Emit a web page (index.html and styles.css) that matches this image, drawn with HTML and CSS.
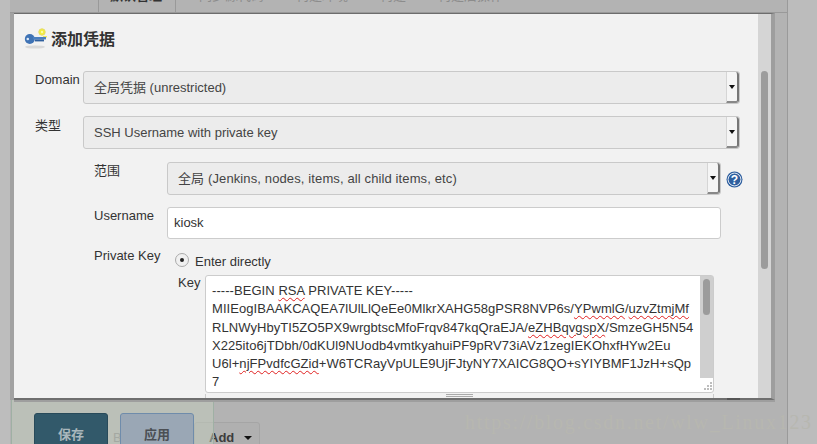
FILE: index.html
```html
<!DOCTYPE html>
<html lang="zh">
<head>
<meta charset="utf-8">
<title>添加凭据</title>
<link rel="stylesheet" href="styles.css">
</head>
<body>
<div class="page">
  <div class="page-edge"></div>
  <div class="page-main">
    <div class="tabs">
      <span class="tab tab-first"></span>
      <span class="tab tab-active"><em>默认管理</em></span>
      <span class="tab tab-lead"><em>同步源代码</em></span>
      <span class="tab"><em>构建环境</em></span>
      <span class="tab"><em>构建</em></span>
      <span class="tab"><em>构建后操作</em></span>
    </div>
    <div class="rule"></div>
    <div class="watermark">https://blog.csdn.net/wlw_Linux123</div>
  </div>
  <div class="page-right"></div>
</div>

<div class="footer-under">
  <button class="btn-add">Add <i class="caret"></i></button>
</div>
<div class="footer-glass"></div>
<div class="footer-buttons">
  <button class="btn btn-save">保存</button>
  <span class="footer-hidden">B</span>
  <button class="btn btn-apply">应用</button>
</div>

<div class="dialog">
  <div class="dialog-body">
    <h1 class="title">
      <svg class="key-icon" width="24" height="24" viewBox="0 0 24 24">
        <ellipse cx="11" cy="21" rx="10" ry="1.6" fill="#d9d9d9"/>
        <circle cx="18" cy="6" r="3.2" fill="#f4ee3c" stroke="#e5dc6a"/>
        <circle cx="18" cy="6" r="1.2" fill="#fbfaa8"/>
        <rect x="19" y="10" width="4" height="1.5" fill="#f0e85c"/>
        <circle cx="5.8" cy="13" r="5" fill="#3f73b5"/>
        <rect x="9" y="11" width="13" height="2.4" fill="#4a7fc0"/>
        <rect x="11" y="13.4" width="9" height="2" fill="#2f5f9e"/>
        <circle cx="3.8" cy="13" r="1.3" fill="#dce8f5"/>
      </svg>
      添加凭据
    </h1>
    <div class="row row-domain">
      <label class="lab lab-top">Domain</label>
      <div class="select select-top"><span>全局凭据 (unrestricted)</span><b class="arrow"></b></div>
    </div>
    <div class="row row-type">
      <label class="lab lab-top">类型</label>
      <div class="select select-top"><span>SSH Username with private key</span><b class="arrow"></b></div>
    </div>
    <div class="row row-scope">
      <label class="lab lab-sub">范围</label>
      <div class="select select-sub"><span>全局 (Jenkins, nodes, items, all child items, etc)</span><b class="arrow"></b></div>
      <svg class="help" width="17" height="17" viewBox="0 0 17 17">
        <circle cx="8.5" cy="8.5" r="8" fill="#2f5f9f"/>
        <circle cx="8.5" cy="8.5" r="6.4" fill="none" stroke="#dfe8f3" stroke-width="1"/>
        <text x="8.5" y="12.6" text-anchor="middle" class="help-q">?</text>
      </svg>
    </div>
    <div class="row row-user">
      <label class="lab lab-sub">Username</label>
      <div class="input">kiosk</div>
    </div>
    <div class="row row-pk">
      <label class="lab lab-sub">Private Key</label>
      <span class="radio"><i></i></span>
      <span class="radio-text">Enter directly</span>
    </div>
    <div class="row row-key">
      <label class="lab-key">Key</label>
      <div class="key-wrap">
        <div class="textarea">
          <div class="key-text">-----BEGIN <u>RSA</u> PRIVATE KEY-----
MIIEogIBAAKCAQEA7lUlLlQeEe0MlkrXAHG58gPSR8NVP6s/<u>YPwmlG</u>/<u>uzvZtmjMf</u>
RLNWyHbyTI5ZO5PX9wrgbtscMfoFrqv847kqQraEJA/<u>eZHBqvgspX</u>/SmzeGH5N54
X225ito6jTDbh/0dKUl9NUodb4vmtkyahuiPF9pRV73iAVz1zegIEKOhxfHYw2Eu
U6l+<u>njFPvdfcGZid</u>+W6TCRayVpULE9UjFJtyNY7XAICG8QO+sYIYBMF1JzH+sQp
7</div>
          <div class="ta-scroll"><div class="ta-thumb"></div></div>
          <svg class="grip" width="12" height="12" viewBox="0 0 12 12">
            <path d="M9 2h2v2H9zM6 5h2v2H6zM9 5h2v2H9zM3 8h2v2H3zM6 8h2v2H6zM9 8h2v2H9z" fill="#bdbdbd"/>
          </svg>
        </div>
        <div class="gripper-zone"><div class="gripper"></div></div>
      </div>
    </div>
  </div>
  <div class="dialog-scroll"><div class="dialog-thumb"></div></div>
</div>
</body>
</html>
```
FILE: styles.css
```css
* { box-sizing: border-box; }
html, body { margin: 0; padding: 0; width: 817px; height: 444px; overflow: hidden; }
body { font-family: "Liberation Sans", "Noto Sans CJK SC", sans-serif; font-size: 13px; color: #333; position: relative; background: #b3b3b3; }

.page { display: flex; height: 444px; }
.page-edge { width: 10px; background: #bdbdbd; }
.page-main { flex: 1; position: relative; }
.page-right { width: 30px; background: #bcbcbc; border-left: 1px solid #9a9a9a; }

.tabs { display: flex; height: 12px; overflow: hidden; color: #8c8c8c; font-size: 13px; }
.tab { margin-right: 32px; white-space: nowrap; }
.tab em { display: block; font-style: normal; line-height: 14px; margin-top: -11px; }
.tab-first { width: 89px; margin-right: 0; border-right: 1px solid #999; }
.tab-active { width: 77px; margin-right: 0; padding-left: 11px; color: #333; font-weight: bold; border-right: 1px solid #999; }
.tab-lead { margin-left: 23px; }
.rule { height: 1px; background: #999; }

.watermark { position: absolute; left: 455px; top: 411px; z-index: 1; font-family: "Liberation Serif", serif; font-size: 20px; letter-spacing: 1.7px; color: #b7b7b0; white-space: nowrap; }

.footer-under { position: absolute; left: 194px; top: 422px; }
.btn-add { font: inherit; font-weight: bold; font-size: 13px; width: 66px; height: 30px; padding: 0 0 0 14px; text-align: left; background: #b0b0b0; border: 1px solid #a5a5a5; border-radius: 3px; color: #3c3c3c; }
.caret { display: inline-block; width: 0; height: 0; margin-left: 6px; border-style: solid; border-width: 4px 4px 0; border-color: #111 transparent transparent; vertical-align: 2px; }

.footer-glass { position: absolute; left: 11px; top: 393px; width: 203px; height: 51px; background: rgba(195, 205, 190, 0.5); border: 1px solid #9fb0a4; border-bottom: 0; }
.footer-buttons { position: absolute; left: 34px; top: 413px; display: flex; height: 40px; }
.btn { font: inherit; font-size: 13px; font-weight: bold; width: 74px; height: 40px; border-radius: 3px; padding: 0; }
.btn-save { background: #32596a; border: 1px solid #284a5a; color: #a9b7bc; }
.btn-apply { background: #9aa7b5; border: 1px solid #6f8cab; color: #4b4f54; }
.footer-hidden { width: 12px; color: #a4a8a2; font-size: 13px; padding: 17px 0 0 5px; }

.dialog { position: absolute; left: 14px; top: 13px; width: 761px; height: 387px; display: flex; background: #f2f2f2; border-top: 1px solid #6d6d6d; border-bottom: 2px solid #6f6f6f; border-right: 4px solid #9e9e9e; box-shadow: -4px 0 0 #a2a2a2, 0 2px 0 #9e9e9e; }
.dialog::after { content: ""; position: absolute; left: 713px; bottom: -2px; width: 13px; height: 2px; background: #555; }
.dialog-body { width: 744px; height: 384px; overflow: hidden; }
.dialog-scroll { width: 13px; background: #d5d5d5; padding: 57px 3px 0; }
.dialog-thumb { width: 7px; height: 198px; background: #9c9c9c; border-radius: 4px; }

.title { display: flex; align-items: center; gap: 3px; margin: 0; height: 57px; padding: 0 0 9px 10px; font-size: 16px; font-weight: bold; color: #333; }
.key-icon { flex: none; }

.row { display: flex; align-items: flex-start; }
.row-domain { height: 45px; }
.row-type { height: 46px; }
.row-scope { height: 45px; }
.row-user { height: 41px; }
.row-pk { height: 27px; }
.row-key { height: 120px; }

.lab { white-space: nowrap; }
.lab-top { width: 69px; padding: 1px 0 0 21px; flex: none; }
.row-type .lab-top { margin-top: -2px; }
.lab-sub { width: 153px; padding: 0 0 0 80px; flex: none; }
.row-scope .lab-sub { margin-top: -2px; }
.row-user .lab-sub { padding-top: 1px; }

.select { position: relative; height: 33px; background: #ececec; border: 1px solid #c9c9c9; border-radius: 3px; line-height: 31px; padding-left: 10px; color: #444; white-space: nowrap; }
.select-top { width: 657px; }
.select-sub { width: 554px; letter-spacing: 0.12px; }
.arrow { position: absolute; right: 0; top: 0; width: 13px; height: 31px; background: #f5f5f5; border-left: 1px solid #d5d5d5; border-right: 2px solid #777; border-bottom: 2px solid #888; border-radius: 0 3px 3px 0; }
.arrow::after { content: ""; position: absolute; left: 2px; top: 13px; border-style: solid; border-width: 4px 3.5px 0; border-color: #111 transparent transparent; }

.help { margin: 9px 0 0 5px; flex: none; }
.help-q { font-family: "Liberation Sans", sans-serif; font-size: 12px; font-weight: bold; fill: #fff; }

.input { width: 554px; height: 32px; background: #fff; border: 1px solid #ccc; border-radius: 3px; line-height: 30px; padding-left: 6px; color: #333; }

.row-pk .lab-sub { width: 146px; }
.radio { position: relative; flex: none; width: 14px; height: 14px; margin: 5px 0 0 15px; border: 1px solid #aaa; border-radius: 50%; background: #f0f0f0; }
.radio i { position: absolute; left: 4px; top: 4px; width: 4px; height: 4px; border-radius: 50%; background: #222; }
.radio-text { margin: 6px 0 0 6px; }

.lab-key { width: 191px; flex: none; margin-top: -1px; padding: 1px 0 0 164px; }
.key-wrap { width: 509px; }
.textarea { position: relative; height: 118px; background: #fff; border: 1px solid #ccc; border-radius: 3px; }
.key-text { width: 494px; height: 116px; padding: 6px 0 0 6px; font-size: 13px; line-height: 18.3px; letter-spacing: 0.06px; color: #333; white-space: pre; overflow: hidden; }
.key-text u { text-decoration: underline wavy #e02020 1px; text-underline-offset: 2px; }
.ta-scroll { position: absolute; right: 0; top: 0; width: 13px; height: 102px; background: #cfcfcf; padding: 3px 3px 0; }
.ta-thumb { width: 7px; height: 36px; background: #9c9c9c; border-radius: 4px; }
.grip { position: absolute; right: 0; bottom: 0; }
.gripper-zone { height: 6px; border-left: 1px solid #ccc; border-right: 1px solid #ccc; }
.gripper { width: 27px; height: 3px; margin: 1px 0 0 240px; border-top: 1px solid #aaa; border-bottom: 1px solid #aaa; }
```
